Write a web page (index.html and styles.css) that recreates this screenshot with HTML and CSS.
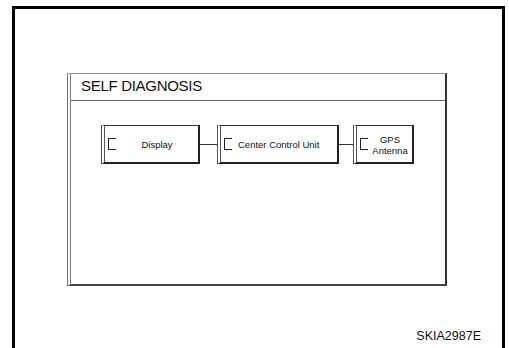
FILE: index.html
```html
<!DOCTYPE html>
<html lang="en">
<head>
    <meta charset="UTF-8">
    <title>Self Diagnosis</title>
    <link rel="stylesheet" href="styles.css">
</head>
<body>
    <div class="sheet">
        <div class="panel">
            <div class="panel-title">SELF DIAGNOSIS</div>
            <div class="chain">
                <div class="unit unit-display">
                    <span class="mark"></span>
                    <span class="label">Display</span>
                </div>
                <div class="wire"></div>
                <div class="unit unit-ccu">
                    <span class="mark"></span>
                    <span class="label">Center Control Unit</span>
                </div>
                <div class="wire wire-short"></div>
                <div class="unit unit-gps">
                    <span class="mark"></span>
                    <span class="label">GPS<br>Antenna</span>
                </div>
            </div>
        </div>
        <div class="code">SKIA2987E</div>
    </div>
</body>
</html>
```

FILE: styles.css
```css
body { margin: 0; background: #fff; font-family: "Liberation Sans", Arial, sans-serif; color: #111; overflow: hidden; }
.sheet { margin: 6px 0 0 12px; width: 493px; height: 342px; border: 3px solid #000; border-bottom: none; padding: 64px 0 0 52px; box-sizing: border-box; }
.panel { width: 380px; height: 213px; box-sizing: border-box; border-left: 4px double #777; border-top: 1px solid #888; border-right: 2px solid #333; border-bottom: 2px solid #444; }
.panel-title { font-size: 15px; padding: 3px 0 0 10px; height: 27px; box-sizing: border-box; border-bottom: 1px solid #666; letter-spacing: -0.3px; }
.chain { display: flex; align-items: center; padding: 24px 0 0 30px; }
.unit { height: 39px; box-sizing: border-box; display: flex; align-items: center; border-left: 4px double #555; border-top: 1px solid #333; border-right: 2px solid #222; border-bottom: 2px solid #222; font-size: 9.5px; }
.unit-display { width: 99px; }
.unit-ccu { width: 122px; }
.unit-gps { width: 61px; }
.mark { width: 7px; height: 10px; border: 1px solid #222; border-right: none; margin-left: 3px; flex: none; }
.label { flex: 1; text-align: center; line-height: 11px; }
.unit-ccu .label { text-align: left; padding-left: 6px; }
.unit-gps .label { padding-top: 1px; }
.wire { width: 17px; height: 1px; background: #333; }
.wire-short { width: 14px; }
.code { text-align: right; font-size: 12.5px; padding-right: 21px; margin-top: 43px; }
```
